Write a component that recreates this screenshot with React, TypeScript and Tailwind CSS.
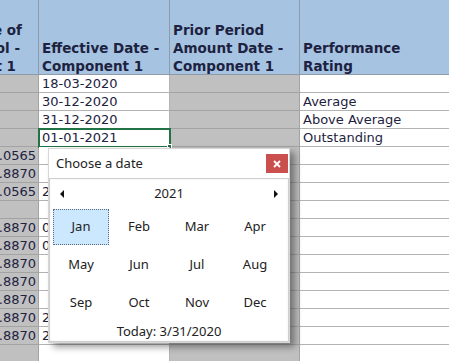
import React from "react";

type Row = { c1: string; c2: string; c4: string };

const rows: Row[] = [
  { c1: "", c2: "18-03-2020", c4: "" },
  { c1: "", c2: "30-12-2020", c4: "Average" },
  { c1: "", c2: "31-12-2020", c4: "Above Average" },
  { c1: "", c2: "01-01-2021", c4: "Outstanding" },
  { c1: "1.0565", c2: "", c4: "" },
  { c1: "0.8870", c2: "", c4: "" },
  { c1: "1.0565", c2: "2020", c4: "" },
  { c1: "", c2: "", c4: "" },
  { c1: "0.8870", c2: "01-01", c4: "" },
  { c1: "0.8870", c2: "01-01", c4: "" },
  { c1: "0.8870", c2: "", c4: "" },
  { c1: "0.8870", c2: "", c4: "" },
  { c1: "0.8870", c2: "", c4: "" },
  { c1: "0.8870", c2: "2020", c4: "" },
  { c1: "0.8870", c2: "2020", c4: "" },
  { c1: "", c2: "", c4: "" },
];

const months = ["Jan", "Feb", "Mar", "Apr", "May", "Jun", "Jul", "Aug", "Sep", "Oct", "Nov", "Dec"];

export default function App() {
  return (
    <div className="relative w-[449px] h-[361px] overflow-hidden bg-white font-['DejaVu_Sans',sans-serif] text-[#1d2240]">
      <div className="grid grid-cols-[39px_131px_130px_149px]">
        {/* header */}
        <div className="h-[75px] bg-[#a6c4e2] border-r border-b border-r-[#8f9aa6] border-b-[#8f9aa6] overflow-hidden flex flex-col justify-end font-bold text-[13.5px] leading-[18px]">
          <div className="-mb-[1px]">
            <div className="flex justify-end whitespace-nowrap pr-[16px]">Percentage of</div>
            <div className="flex justify-end whitespace-nowrap pr-[18px]">Control Pool -</div>
            <div className="flex justify-end whitespace-nowrap pr-[22px]">Component 1</div>
          </div>
        </div>
        <div className="h-[75px] bg-[#a6c4e2] border-r border-b border-r-[#8f9aa6] border-b-[#8f9aa6] flex flex-col justify-end pl-[3px] font-bold text-[13.5px] leading-[18px] whitespace-nowrap">
          <div className="-mb-[1px]">
            <div>Effective Date -</div>
            <div>Component 1</div>
          </div>
        </div>
        <div className="h-[75px] bg-[#a6c4e2] border-r border-b border-r-[#8f9aa6] border-b-[#8f9aa6] flex flex-col justify-end pl-[3px] font-bold text-[13.5px] leading-[18px] whitespace-nowrap">
          <div className="-mb-[1px]">
            <div>Prior Period</div>
            <div>Amount Date -</div>
            <div>Component 1</div>
          </div>
        </div>
        <div className="h-[75px] bg-[#a6c4e2] border-b border-b-[#8f9aa6] flex flex-col justify-end pl-[3px] font-bold text-[13.5px] leading-[18px] whitespace-nowrap">
          <div className="-mb-[1px]">
            <div>Performance</div>
            <div>Rating</div>
          </div>
        </div>

        {rows.map((r, i) => (
          <React.Fragment key={i}>
            <div className="h-[18px] bg-[#c0c0c0] border-r border-b border-[#a3a3a3] overflow-hidden flex justify-end items-center pr-[2px] text-[13px] leading-[17px] whitespace-nowrap">
              {r.c1}
            </div>
            <div
              className={
                "relative h-[18px] bg-white border-r border-b border-[#b3b3b3] flex items-center pl-[3px] text-[13px] leading-[17px] whitespace-nowrap " +
                (i === 3 ? "outline-2 outline-[#217346] -outline-offset-1" : "")
              }
            >
              {r.c2}
              {i === 3 && <div className="absolute right-[-3px] bottom-[-3px] w-[5px] h-[5px] bg-[#217346] border border-white" />}
            </div>
            <div className="h-[18px] bg-[#c0c0c0] border-r border-b border-[#a3a3a3]" />
            <div className="h-[18px] bg-white border-b border-[#b3b3b3] flex items-center pl-[3px] text-[13px] leading-[17px] whitespace-nowrap">
              {r.c4}
            </div>
          </React.Fragment>
        ))}
      </div>

      {/* date picker popup */}
      <div className="absolute left-[48px] top-[148px] w-[242px] h-[195px] bg-white border border-[#d6d6d6] shadow-[5px_4px_7px_rgba(0,0,0,0.4)] font-['Noto_Sans',sans-serif] text-[#222]">
        <div className="h-[29px] flex items-center justify-between pl-[7px] pr-[1px]">
          <span className="text-[13px]">Choose a date</span>
          <div className="w-[22px] h-[19px] bg-[#c9504f] flex items-center justify-center">
            <svg width="8" height="8" viewBox="0 0 8 8">
              <path d="M1 1 L7 7 M7 1 L1 7" stroke="white" strokeWidth="1.8" />
            </svg>
          </div>
        </div>
        <div className="h-[164px] border border-[#cfcfcf] shadow-[inset_0_0_2px_rgba(0,0,0,0.08)] flex flex-col">
          <div className="h-[32px] flex items-center justify-between px-[10px]">
            <svg width="5" height="8" viewBox="0 0 5 8">
              <path d="M4 0 L0 4 L4 8 Z" fill="#111" />
            </svg>
            <span className="text-[13px]">2021</span>
            <svg width="5" height="8" viewBox="0 0 5 8">
              <path d="M1 0 L5 4 L1 8 Z" fill="#111" />
            </svg>
          </div>
          <div className="grid grid-cols-[56px_56px_56px_56px] grid-rows-[36px_36px_36px] gap-x-[2px] gap-y-[2px] pl-[3px]">
            {months.map((m, i) => (
              <div
                key={m}
                className={
                  "flex items-center justify-center text-[13px] " +
                  (i === 0 ? "bg-[#cce8ff] border border-dotted border-[#5a6a80]" : "")
                }
              >
                {m}
              </div>
            ))}
          </div>
          <div className="flex-1 flex items-center justify-center text-[13px] pt-[1px]">Today: 3/31/2020</div>
        </div>
      </div>
    </div>
  );
}
